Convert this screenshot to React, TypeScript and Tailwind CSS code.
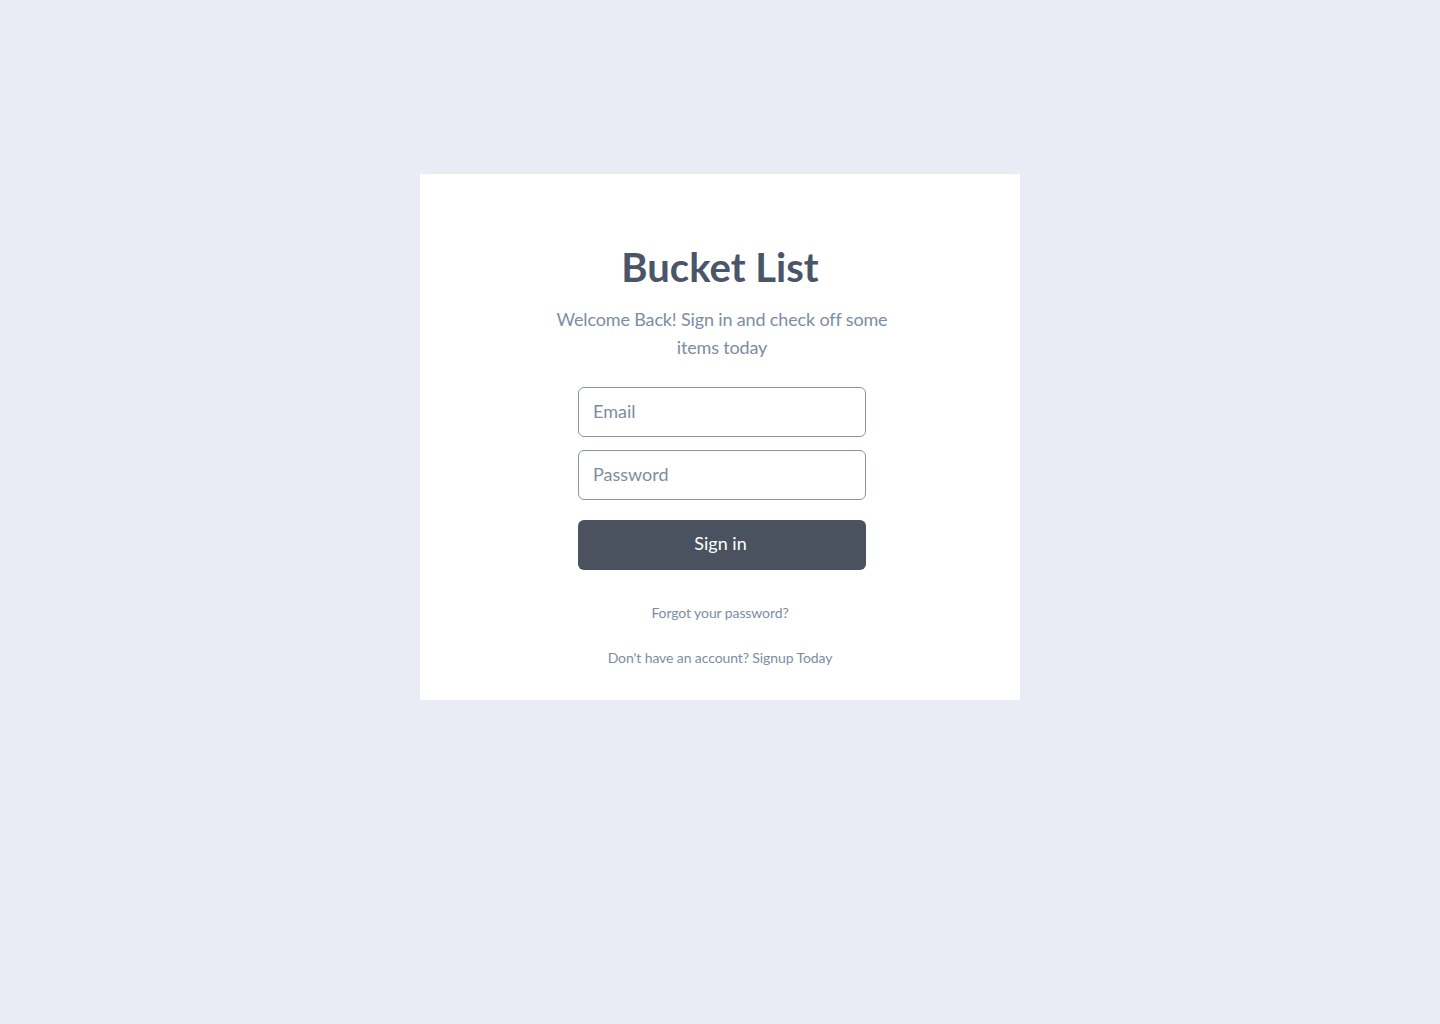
export default function App() {
  return (
    <div
      className="min-h-[1024px] w-full bg-[#e9ecf5] pt-[174px]"
      style={{ fontFamily: 'Lato, "Open Sans", sans-serif' }}
    >
      <div className="mx-auto flex w-[600px] flex-col items-center bg-white pb-[32px] pt-[69px]">
        <h1 className="text-[40px] font-bold leading-[48px] text-[#4a5568]">Bucket List</h1>
        <p className="ml-1 mt-[14px] max-w-[350px] text-center text-lg leading-7 tracking-[-0.15px] text-[#7e8ca3]">
          Welcome Back! Sign in and check off some items today
        </p>

        {/* Form */}
        <form className="ml-1 mt-[26px] flex w-72 flex-col" onSubmit={(e) => e.preventDefault()}>
          <input
            type="email"
            placeholder="Email"
            className="h-[50px] w-full rounded-md border border-[#8795ab] px-[14px] pb-[2px] text-lg text-[#4a5568] placeholder:text-[#7e8ca3] focus:outline-none"
          />
          <input
            type="password"
            placeholder="Password"
            className="mt-[13px] h-[50px] w-full rounded-md border border-[#8795ab] px-[14px] pb-[2px] text-lg text-[#4a5568] placeholder:text-[#7e8ca3] focus:outline-none"
          />
          <button
            type="submit"
            className="mt-[20px] h-[50px] w-full rounded-md bg-[#4a5260] pb-1 pr-[3px] text-lg text-white"
          >
            Sign in
          </button>
        </form>

        <a href="#" className="mt-[33px] text-sm leading-5 tracking-[-0.1px] text-[#7e8ca3]">
          Forgot your password?
        </a>
        <a href="#" className="mt-[25px] text-sm leading-5 tracking-[-0.1px] text-[#7e8ca3]">
          Don't have an account? Signup Today
        </a>
      </div>
    </div>
  )
}
